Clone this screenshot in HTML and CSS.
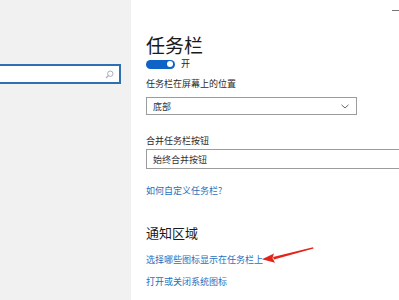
FILE: index.html
```html
<!DOCTYPE html>
<html lang="zh-CN">
<head>
<meta charset="utf-8">
<title>任务栏</title>
<link rel="stylesheet" href="styles.css">
</head>
<body>
<div class="window">
  <aside class="sidebar">
    <div class="search">
      <svg class="search-icon" width="9" height="9" viewBox="0 0 9 9"><circle cx="5.3" cy="3.7" r="2.7" fill="none" stroke="#a3adb9" stroke-width="1"/><line x1="3.4" y1="5.6" x2="1" y2="8" stroke="#a3adb9" stroke-width="1.2"/></svg>
    </div>
  </aside>
  <main class="content">
    <h1 class="title">任务栏</h1>
    <div class="toggle-row">
      <span class="toggle"><span class="knob"></span></span>
      <span class="toggle-text">开</span>
    </div>
    <div class="label label-pos">任务栏在屏幕上的位置</div>
    <div class="select select-pos">
      <span>底部</span>
      <svg class="chevron" width="8" height="5" viewBox="0 0 8 5"><polyline points="0.5,0.8 4,4 7.5,0.8" fill="none" stroke="#666" stroke-width="1"/></svg>
    </div>
    <div class="label label-merge">合并任务栏按钮</div>
    <div class="select select-merge"><span>始终合并按钮</span></div>
    <a class="link link-custom">如何自定义任务栏?</a>
    <h2 class="subtitle">通知区域</h2>
    <a class="link link-icons">选择哪些图标显示在任务栏上</a>
    <a class="link link-system">打开或关闭系统图标</a>
  </main>
  <div class="minimize"></div>
  <svg class="arrow" width="70" height="20" viewBox="0 0 70 20">
    <polygon points="53,1.2 53.6,2.6 14,13.6 13,11" fill="#e3241b"/>
    <polygon points="2,13.2 14,7.5 12.5,12 15,16.8" fill="#e3241b"/>
  </svg>
</div>
</body>
</html>
```

FILE: styles.css
```css
html, body {
  margin: 0;
  padding: 0;
  background: #ffffff;
}
body {
  font-family: "Noto Sans CJK SC", "Noto Sans", sans-serif;
  color: #1f1f1f;
}
.window {
  position: relative;
  width: 399px;
  height: 300px;
  overflow: hidden;
  display: flex;
}
.sidebar {
  width: 131px;
  flex: none;
  background: #f1f1f1;
  padding-top: 64px;
  box-sizing: border-box;
}
.search {
  margin-left: -2px;
  width: 123px;
  height: 20px;
  box-sizing: border-box;
  border: 2px solid #2f70b5;
  background: #ffffff;
  display: flex;
  align-items: center;
  justify-content: flex-end;
  padding-right: 5px;
}
.search-icon {
  display: block;
}
.content {
  flex: 1;
  padding: 37px 0 0 15px;
  box-sizing: border-box;
  display: flex;
  flex-direction: column;
  align-items: flex-start;
}
.title {
  margin: 0;
  font-family: "Liberation Sans", "Noto Sans CJK SC", sans-serif;
  font-size: 19px;
  line-height: 20px;
  font-weight: 400;
  color: #1a1a1a;
}
.toggle-row {
  margin-top: 2px;
  height: 10px;
  display: flex;
  align-items: center;
  gap: 6px;
}
.toggle {
  width: 29px;
  height: 9px;
  border-radius: 5px;
  background: #0f62c6;
  display: flex;
  align-items: center;
  justify-content: flex-end;
  padding-right: 2px;
  box-sizing: border-box;
}
.knob {
  width: 6px;
  height: 6px;
  border-radius: 50%;
  background: #ffffff;
}
.toggle-text {
  font-family: "Liberation Sans", "Noto Sans CJK SC", sans-serif;
  font-size: 9px;
  line-height: 10px;
  color: #222;
}
.label {
  font-size: 9px;
  line-height: 12px;
  color: #2a2a2a;
}
.label-pos {
  margin-top: 9px;
}
.label-merge {
  margin-top: 20px;
}
.select {
  box-sizing: border-box;
  border: 1px solid #9c9c9c;
  background: #ffffff;
  display: flex;
  align-items: center;
  justify-content: space-between;
  padding: 0 6px 0 6px;
  font-size: 9px;
  color: #333;
}
.select-pos {
  margin-top: 7px;
  width: 211px;
  height: 18px;
}
.select-merge {
  margin-top: 2px;
  width: 280px;
  height: 20px;
}
.chevron {
  display: block;
  margin-right: 1px;
}
.link {
  font-size: 9px;
  line-height: 12px;
  color: #1f6fc0;
  text-decoration: none;
}
.link-custom {
  margin-top: 16px;
}
.subtitle {
  margin: 28px 0 0 0;
  font-size: 13px;
  line-height: 16px;
  font-weight: 400;
  color: #1a1a1a;
}
.link-icons {
  margin-top: 13px;
}
.link-system {
  margin-top: 10px;
}
.minimize {
  position: absolute;
  top: 10px;
  right: 0;
  width: 7px;
  height: 1px;
  background: #777;
}
.arrow {
  position: absolute;
  left: 260px;
  top: 246px;
}
```
